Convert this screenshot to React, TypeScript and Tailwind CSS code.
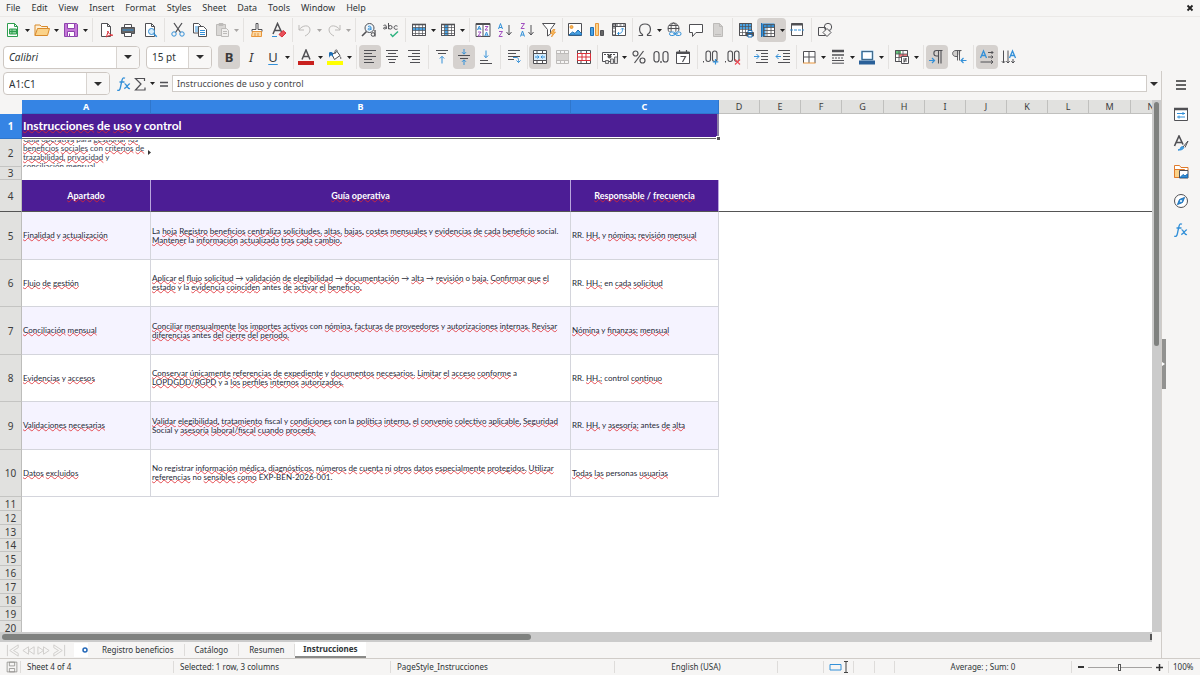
import React from 'react'
import type { ReactNode } from 'react'

const INK = '#505054'
const BLUE = '#3390d8'
const ORANGE = '#e9963a'
const RED = '#d9303a'
const MUTED = '#bdbbb9'

function Icon({ children, stroke = INK }: { children: ReactNode; stroke?: string }) {
  return (
    <svg viewBox="0 0 16 16" className="size-4 shrink-0" fill="none" stroke={stroke} aria-hidden="true">
      {children}
    </svg>
  )
}

function Caret({ muted = false }: { muted?: boolean }) {
  return (
    <svg viewBox="0 0 5 3" className="w-[5px] h-[3px]" aria-hidden="true">
      <path d="M0 0h5L2.500 3z" fill={muted ? '#a9a7a5' : '#222'} />
    </svg>
  )
}

function BigCaret() {
  return (
    <svg viewBox="0 0 8 4" className="w-2 h-1" aria-hidden="true">
      <path d="M0 0h8L4 4z" fill="#2e2e2e" />
    </svg>
  )
}

const page = 'M3.500 1.500h6l3 3v10h-9z'
const grid = 'M1.500 2.500h13v11h-13zM1.500 5.500h13M1.500 8.500h13M1.500 11.500h13M4.500 2.500v11M8 2.500v11M11.500 2.500v11'

const icons = {
  new: (
    <Icon stroke="#2f9e4f">
      <path d="M2.500 1.500h7l3 3v10h-10z" fill="#fff" />
      <path d="M9.500 1.500v3h3" />
      <path d="M4.500 7h7v5h-7z" fill="#8fd3a0" />
      <path d="M4.500 9.500h7M7 7v5" />
    </Icon>
  ),
  open: (
    <Icon stroke="#d98a2b">
      <path d="M1 13.500V3h5l1.500 1.500h6v2" fill="#fdf0d8" />
      <path d="M1 13.500l2.500-7h12l-2 7z" fill="#fbd38a" />
    </Icon>
  ),
  save: (
    <Icon stroke="#8e44ad">
      <path d="M1.500 1.500h12l1 1v12h-13z" fill="#c678d8" />
      <path d="M4.500 1.500h7v5h-7z" fill="#fff" />
      <path d="M4.500 9.500h7v5h-7z" fill="#fff" />
      <path d="M6.500 11.500v3" />
    </Icon>
  ),
  pdf: (
    <Icon>
      <path d={page} fill="#fff" />
      <path d="M9.500 1.500v3h3" />
      <path d="M8 15c1-2 2-4 1.800-6 1 3 2.500 4 5 4.200-2.500 0-5 .5-6.800 1.800z" stroke={RED} />
    </Icon>
  ),
  print: (
    <Icon>
      <path d="M4.500 5V2.500h7V5" fill="#fff" />
      <path d="M1.500 5.500h13v6h-13z" fill="#666" />
      <path d="M2.500 8h11" stroke={BLUE} />
      <path d="M4.500 10.500h7v4h-7z" fill="#fff" />
    </Icon>
  ),
  preview: (
    <Icon>
      <path d={page} fill="#fff" />
      <path d="M9.500 1.500v3h3" />
      <circle cx="9.500" cy="9.500" r="3" stroke={BLUE} fill="#d8ecfa" />
      <path d="M11.800 11.800l3 3" stroke={BLUE} strokeWidth="1.500" />
    </Icon>
  ),
  cut: (
    <Icon>
      <path d="M4 1l6.500 9.500M12 1L5.500 10.500" strokeWidth="1.300" />
      <circle cx="4" cy="12" r="2.200" stroke={BLUE} />
      <circle cx="12" cy="12" r="2.200" stroke={BLUE} />
    </Icon>
  ),
  copy: (
    <Icon>
      <path d="M1.500 1.500h5l2.500 2.500v7h-7.500z" fill="#fff" />
      <path d="M3 5h4M3 7h3M3 9h3" stroke={BLUE} />
      <path d="M6.500 4.500h5l3 3v7h-8z" fill="#fff" />
      <path d="M8 8.500h5M8 10.500h5M8 12.500h5" stroke={BLUE} />
    </Icon>
  ),
  paste: (
    <Icon stroke={MUTED}>
      <path d="M2.500 2.500h9v11h-9z" fill="#d9d7d5" />
      <path d="M5 1.500h4v2H5z" />
      <path d="M7.500 6.500h5l2 2v6h-7z" fill="#f0efee" />
      <path d="M9 9.500h4M9 11.500h4" />
    </Icon>
  ),
  clone: (
    <Icon>
      <path d="M7 1.500h2v6h4v2H3v-2h4z" fill="#fff" />
      <path d="M3.500 9.500h9v5h-10z" stroke={ORANGE} fill="#fbd9a6" />
      <path d="M6 11v3M9 11v3" stroke={ORANGE} />
    </Icon>
  ),
  clear: (
    <Icon>
      <path d="M2 12L6.500 1.500 11 11M4 8.500h5.500" strokeWidth="1.500" />
      <path d="M1 14.500h5" stroke={BLUE} />
      <path d="M8 12.500l4-4 3 2.500-4 4z" fill="#e8505a" stroke={RED} />
    </Icon>
  ),
  undo: (
    <Icon stroke={MUTED}>
      <path d="M2 3v5h5M2 8c3-5 11-6 11 0 0 3-3 5-5 6" />
    </Icon>
  ),
  redo: (
    <Icon stroke={MUTED}>
      <path d="M14 3v5H9M14 8C11 3 3 2 3 8c0 3 3 5 5 6" />
    </Icon>
  ),
  find: (
    <Icon>
      <circle cx="8.500" cy="6" r="4.500" fill="#eef6fc" />
      <path d="M5.500 9.500L1 14" strokeWidth="1.600" />
      <path d="M7 4.500c2-1 3 0 3 1v2.500M10 6c-2 0-3 .3-3 1.200s2 1 3 0" stroke={BLUE} />
      <path d="M14 8v6.500" strokeWidth="1.300" />
      <circle cx="12" cy="12.500" r="1.800" />
    </Icon>
  ),
  spell: (
    <Icon>
      <path d="M.5 3.500c1-.6 2.800-.6 2.800.8V7M3.300 5.200C2 5.200.5 5.300.5 6.300s2 .8 2.800-.3M5.500 1v6.200" />
      <circle cx="7.300" cy="5.300" r="1.800" />
      <path d="M14.500 4.200c-1.500-1-3.500-.4-3.500 1.300S13 7.800 14.500 7" />
      <path d="M7.500 12l2.200 2.500L15 9.500" stroke="#2fb380" strokeWidth="1.500" />
    </Icon>
  ),
  row: (
    <Icon>
      <path d="M1.500 2.500h13v11h-13z" fill="#fff" />
      <path d="M2 5.500h12v3H2z" fill="#4aa3e3" stroke="none" />
      <path d={grid} strokeWidth=".7" />
      <path d="M1 2.500h14" strokeWidth="1.600" />
    </Icon>
  ),
  column: (
    <Icon>
      <path d="M1.500 2.500h13v11h-13z" fill="#fff" />
      <path d="M4.500 3H8v10.500H4.500z" fill="#4aa3e3" stroke="none" />
      <path d={grid} strokeWidth=".7" />
      <path d="M1 2.500h14" strokeWidth="1.600" />
    </Icon>
  ),
  sort: (
    <Icon>
      <path d="M1 1.500h14v13H1zM8 2v12.500" fill="#fff" />
      <path d="M1 2h14" strokeWidth="2" />
      <path d="M2.500 8l1.800-4L6 8M3 6.800h2.500M9.800 14l1.700-4 1.700 4M10.300 13h2.500" stroke={BLUE} />
      <path d="M3 10h3l-3 4h3M10 4.500h3l-3 3.500h3" stroke="#a24fc0" />
    </Icon>
  ),
  ascending: (
    <Icon>
      <path d="M1.500 7l2-5.500 2 5.500M2.200 5.500H5" stroke={BLUE} />
      <path d="M2 9.500h3.500l-3.500 5h3.500" stroke="#a24fc0" />
      <path d="M12 3v9.500M9.500 10l2.500 3 2.500-3" />
    </Icon>
  ),
  descending: (
    <Icon>
      <path d="M2 1.500h3.500l-3.500 5h3.500" stroke="#a24fc0" />
      <path d="M1.500 14.500l2-5.500 2 5.500M2.200 13H5" stroke={BLUE} />
      <path d="M12 3v9.500M9.500 10l2.500 3 2.500-3" />
    </Icon>
  ),
  filter: (
    <Icon>
      <path d="M1.500 1.500h12.500L9.500 7.500v4.500l-3 2V7.500z" fill="#fff" />
      <path d="M12 7.500l-2.500 4h2.200L10.500 15l4-5h-2.200l1.700-2.500z" fill="#fbbf5c" stroke={ORANGE} strokeWidth=".8" />
    </Icon>
  ),
  image: (
    <Icon>
      <path d="M1.500 1.500h13v12h-13z" fill="#fff" />
      <circle cx="4.500" cy="5" r="1.500" fill="#f7b64b" stroke={ORANGE} />
      <path d="M2 13l3.500-3 2.500 1.500 3-3.500 3.500 3.500V13z" fill="#4aa3e3" stroke="#1f6fb5" />
    </Icon>
  ),
  chart: (
    <Icon>
      <path d="M1.500 5.500h3v8h-3z" fill="#4aa3e3" stroke="#1f6fb5" />
      <path d="M6.500 1.500h3v12h-3z" fill="#fbd38a" stroke={ORANGE} />
      <path d="M11.500 8.500h3v5h-3z" fill="#666" />
    </Icon>
  ),
  pivot: (
    <Icon>
      <path d="M1.500 1.500h13v12h-13zM1.500 4.500h13M4.500 1.500v12" fill="#fff" />
      <path d="M1.500 3h13M3 1.500v12" strokeDasharray="2 1.500" />
      <path d="M7 11.500c4 0 4.500-1.500 4.500-5M10 7.500l1.500-1.500L13 7.500M8 10l-1.500 1.500L8 13" stroke={BLUE} />
    </Icon>
  ),
  omega: (
    <Icon>
      <path d="M1.500 13.500h4v-1C1.500 10 1 2 8 2s6.500 8 2.500 10.500v1h4" strokeWidth="1.200" />
    </Icon>
  ),
  link: (
    <Icon>
      <circle cx="7.500" cy="6.500" r="5.500" />
      <ellipse cx="7.500" cy="6.500" rx="2.500" ry="5.500" />
      <path d="M2 6.500h11M3 3.500h9M3 9.500h3" />
      <path d="M3 9.500h13v5H3z" fill="#f6f5f4" stroke="none" />
      <rect x="3.500" y="10" width="5.500" height="3.500" rx="1.700" stroke={BLUE} />
      <rect x="9.500" y="10" width="5.500" height="3.500" rx="1.700" stroke={BLUE} />
      <path d="M7 11.800h5" stroke={BLUE} />
    </Icon>
  ),
  comment: (
    <Icon>
      <path d="M1.500 2.500h13v8H8l-3.500 4v-4h-3z" fill="#fff" />
    </Icon>
  ),
  header: (
    <Icon stroke={MUTED}>
      <path d={page} fill="#d5d3d1" />
      <path d="M9.500 1.500v3h3M5 12.500h6" />
    </Icon>
  ),
  printArea: (
    <Icon>
      <path d="M1.500 1.500h12v12h-12z" fill="#fff" />
      <path d="M2 2h11.500v5H2z" fill="#4aa3e3" stroke="none" />
      <path d="M1.500 1.500h12v12h-12zM1.500 4.500h12M1.500 7.500h12M1.500 10.500h12M4.500 1.500v12M7.500 1.500v12M10.500 1.500v12" strokeWidth=".7" />
      <path d="M8.500 10.500h7v3.500h-7z" fill="#555" />
      <path d="M10 8.500h4v2h-4zM10 12.500h4v2.500h-4z" fill="#fff" stroke="#1f6fb5" />
    </Icon>
  ),
  freeze: (
    <Icon>
      <path d="M3.500 2.500h11v12h-11z" fill="#fff" />
      <path d="M1 1.500h13.500v4h-9v9H1z" fill="#3390d8" stroke="none" />
      <path d="M3.500 2.500h11v12h-11zM3.500 5.500h11M3.500 8.500h11M3.500 11.500h11M7 2.500v12M11 2.500v12" strokeWidth=".8" />
      <path d="M1.500 1v14" stroke="#1f6fb5" />
    </Icon>
  ),
  split: (
    <Icon>
      <path d="M2.500 1.500h11v12h-11z" fill="#fff" />
      <path d="M2.500 2.500h11" strokeWidth="2" />
      <path d="M1 8h14" stroke={BLUE} strokeDasharray="3 1" />
    </Icon>
  ),
  shapes: (
    <Icon>
      <path d="M1.500 5.500h7v8h-7z" />
      <circle cx="11" cy="5" r="3.700" />
      <path d="M10 6.500l4 4-4 4-4-4z" fill="#f6f5f4" />
    </Icon>
  ),
  fontColor: (
    <Icon>
      <path d="M4 10.500L8 1l4 9.500M5.300 7.500h5.400" strokeWidth="1.500" />
      <path d="M0 14h16" stroke="#c9211e" strokeWidth="4" />
    </Icon>
  ),
  highlight: (
    <Icon>
      <path d="M5 5.500l5-3 3 4-5.500 4z" fill="#fff" />
      <path d="M8 5V2.500c0-2 2.500-2 2.500 0M12.500 7c1.500 1 1.500 2.500 1 3" />
      <path d="M2 4c0-1.500 3-1.500 4 0v4C4 5.500 3 6.500 2 9z" fill="#1f6fb5" stroke="none" />
      <path d="M0 14h16" stroke="#ffff00" strokeWidth="4" />
    </Icon>
  ),
  left: (
    <Icon>
      <path d="M2 1.500h12M2 4.500h8M2 7.500h12M2 10.500h8M2 13.500h10" />
    </Icon>
  ),
  center: (
    <Icon>
      <path d="M2 1.500h12M4 4.500h8M2 7.500h12M4 10.500h8M5 13.500h6" />
    </Icon>
  ),
  right: (
    <Icon>
      <path d="M2 1.500h12M6 4.500h8M2 7.500h12M6 10.500h8M4 13.500h10" />
    </Icon>
  ),
  top: (
    <Icon>
      <path d="M2 1.500h12M4 4.500h8" />
      <path d="M8 14.500v-7M5.800 9.500L8 7.300l2.200 2.200" stroke={BLUE} />
    </Icon>
  ),
  middle: (
    <Icon>
      <path d="M2 6.500h12M4 9.500h8" />
      <path d="M8 0v5M6 3.200l2 2 2-2M8 16v-5M6 12.800l2-2 2 2" stroke={BLUE} />
    </Icon>
  ),
  bottom: (
    <Icon>
      <path d="M2 11.500h8M2 14.500h12" />
      <path d="M8 1.500v7M5.800 6.500L8 8.700l2.200-2.200" stroke={BLUE} />
    </Icon>
  ),
  wrap: (
    <Icon>
      <path d="M2 1.500h12M2 4.500h8M2 7.500h12M2 10.500h6" />
      <path d="M7 8.500h3c3 0 2.500 2 2.500 5M10.500 11.500l2 2 2-2" stroke={BLUE} />
    </Icon>
  ),
  merge: (
    <Icon>
      <path d="M1.500 1.500h13v13h-13z" fill="#fff" />
      <path d="M1.500 4.500h13v7h-13z" fill="#d4ebfb" />
      <path d="M5 1.500v3M10.500 1.500v3M5 11.500v3M10.500 11.500v3" />
      <path d="M3 8h4M5.500 6.500L7 8 5.500 9.500M13 8H9M10.500 6.500L9 8l1.500 1.500" stroke={BLUE} />
    </Icon>
  ),
  mergeOff: (
    <Icon stroke={MUTED}>
      <path d="M2.500 1.500h12v13h-12zM2.500 4.500h12M2.500 11.500h12M6.500 1.500v3M10.500 1.500v3M6.500 11.500v3M10.500 11.500v3" />
      <path d="M2.500 5h12v6h-12z" fill="#d5d3d1" stroke="none" />
    </Icon>
  ),
  unmerge: (
    <Icon>
      <path d="M1.500 1.500h13v13h-13z" fill="#fff" />
      <path d="M5 1.500v3M10.500 1.500v3M5 11.500v3M10.500 11.500v3" />
      <path d="M1.500 4.500h13v7h-13zM6 4.500v7M10 4.500v7M1.500 8h13" stroke={RED} />
    </Icon>
  ),
  currency: (
    <Icon>
      <path d="M.5 3.500h15v9H.5z" fill="#fff" />
      <path d="M2 5.500h12" strokeDasharray="2 1" />
      <circle cx="7.500" cy="7.500" r="2" fill="#555" stroke="none" />
      <path d="M3.500 11.500v3h3v-3zM8.500 10v4.500h3V10zM12.500 8v6.500h3V8z" fill="#ddd" strokeWidth=".8" />
    </Icon>
  ),
  percent: (
    <Icon>
      <circle cx="4.500" cy="4.500" r="2.500" strokeWidth="1.200" />
      <circle cx="11.500" cy="11.500" r="2.500" strokeWidth="1.200" />
      <path d="M12.500 2l-9 12" strokeWidth="1.200" />
    </Icon>
  ),
  number: (
    <Icon>
      <rect x="1" y="2.500" width="5" height="10.500" rx="2.500" strokeWidth="1.200" />
      <rect x="10" y="2.500" width="5" height="10.500" rx="2.500" strokeWidth="1.200" />
      <path d="M8 12v2" strokeWidth="1.300" />
    </Icon>
  ),
  date: (
    <Icon>
      <path d="M1.500 3h13v11.500h-13z" fill="#fff" />
      <path d="M1 4h14" strokeWidth="2" />
      <path d="M4.500 1v3M11.500 1v3M5.500 7.500h5l-3 5.500" strokeWidth="1.200" />
    </Icon>
  ),
  addDecimal: (
    <Icon>
      <path d="M.5 12v1.500" />
      <rect x="3" y="2" width="4.500" height="10.500" rx="2.200" strokeWidth="1.100" />
      <rect x="9.500" y="2" width="4.500" height="10.500" rx="2.200" strokeWidth="1.100" />
      <path d="M12.500 10v5.500M9.800 12.800h5.500" stroke={BLUE} strokeWidth="1.200" />
    </Icon>
  ),
  removeDecimal: (
    <Icon>
      <path d="M.5 12v1.500" />
      <rect x="3" y="2" width="4.500" height="10.500" rx="2.200" strokeWidth="1.100" />
      <rect x="9.500" y="2" width="4.500" height="10.500" rx="2.200" strokeWidth="1.100" />
      <path d="M10 10.500l5 5M15 10.500l-5 5" stroke="#ec4b55" strokeWidth="1.200" />
    </Icon>
  ),
  indent: (
    <Icon>
      <path d="M3 1.500h12M8 4.500h7M8 7.500h7M8 10.500h7M3 13.500h12" />
      <path d="M1 7.500h5M3.500 5l2.500 2.500L3.500 10" stroke={BLUE} />
    </Icon>
  ),
  outdent: (
    <Icon>
      <path d="M3 1.500h12M8 4.500h7M8 7.500h7M8 10.500h7M3 13.500h12" />
      <path d="M1 7.500h5M3.500 5L1 7.500 3.500 10" stroke={BLUE} />
    </Icon>
  ),
  border: (
    <Icon>
      <path d="M2.500 14V2.500h11.500V14M8 2.500V14M2.500 8h11.500" fill="#fff" />
      <path d="M2 14h12.500" stroke={ORANGE} />
    </Icon>
  ),
  borderStyle: (
    <Icon>
      <path d="M2 2h12" strokeWidth="2.500" />
      <path d="M2 6h12" strokeWidth="1.500" />
      <path d="M2 9h12" strokeDasharray="2 1" />
      <path d="M2 11.500h12M2 14.200h12" />
    </Icon>
  ),
  borderColor: (
    <Icon>
      <path d="M3 2.500h10.500v8H3z" fill="#fff" stroke={BLUE} strokeWidth="1.500" />
      <path d="M3 2.500h10.500v8H3z" strokeWidth=".6" />
      <path d="M0 13.500h16" stroke="#2a6099" strokeWidth="4" />
    </Icon>
  ),
  conditional: (
    <Icon>
      <path d="M1.500 1.500h12v11h-12z" fill="#fff" />
      <path d="M2 2h5v3H2z" fill="#62c27a" stroke="none" />
      <path d="M5 5h8v3H5z" fill="#ee7a80" stroke="none" />
      <path d="M1.500 1.500h12v11h-12zM1.500 5h12M1.500 8.500h12M5 1.500v11M9 1.500v11" strokeWidth=".8" />
      <path d="M7.500 7.500h7v7h-7z" fill="#fff" />
      <path d="M9 10h4M9 12h4M12 9l-2 4.500" />
    </Icon>
  ),
  ltr: (
    <Icon>
      <path d="M13.500 1.500h-6c-3.500 0-3.500 5.500 0 5.500h1.500M9.500 1.500v13M12 1.500v13" strokeWidth="1.100" />
      <path d="M0 11.500h5.500M3 9l2.500 2.500L3 14" stroke={BLUE} strokeWidth="1.200" />
    </Icon>
  ),
  rtl: (
    <Icon>
      <path d="M10.500 1.500H5c-4.500 0-4.500 6 0 6h1.500z" fill="#cfcdcb" stroke="none" />
      <path d="M10.500 1.500H5c-4.500 0-4.500 6 0 6h1.500M6.500 1.500v10M8.500 1.500v10" strokeWidth=".9" />
      <path d="M15.500 11.500H10M12.500 9L10 11.500l2.500 2.500" stroke={BLUE} strokeWidth="1.200" />
    </Icon>
  ),
  horizontal: (
    <Icon>
      <path d="M1.500 9L4.500 2l3 7M2.700 6.500h4" stroke={BLUE} strokeWidth="1.300" />
      <path d="M9 3.500h5M12.500 2L14 3.500 12.500 5M9 8h5M12.500 6.500L14 8l-1.500 1.500M1.500 13h12.500M12 11.200l2 1.800-2 1.800" />
    </Icon>
  ),
  vertical: (
    <Icon>
      <path d="M8.500 9l3-7 3 7M9.700 6.500h4" stroke={BLUE} strokeWidth="1.300" />
      <path d="M2.500 1.500v12.500M.8 12.200L2.500 14l1.700-1.800M7 1.500v12.500M5.300 12.200L7 14l1.700-1.800M12 10v4M10.300 12.200L12 14l1.700-1.800" />
    </Icon>
  ),
  fx: (
    <Icon stroke={BLUE}>
      <path d="M9 2.200C7 1 6.200 3 5.800 5L4.300 12c-.4 2-1.500 3-3 2M3.500 6h5" strokeWidth="1.300" />
      <path d="M8.500 8c2-1 2.500 5.500 5.500 4.500M14 8c-1.500-.5-4 4.500-5.800 4.500" strokeWidth="1.300" />
    </Icon>
  ),
  sum: (
    <Icon>
      <path d="M12.500 5V2.500h-9L9 8l-5.500 6h9.500V11.500" strokeWidth="1.200" />
    </Icon>
  ),
  equals: (
    <Icon>
      <path d="M4 6.500h8M4 10h8" strokeWidth="1.500" />
    </Icon>
  ),
  menu: (
    <Icon stroke="#333">
      <path d="M3 4h10M3 8h10M3 12h10" strokeWidth="1.500" />
    </Icon>
  ),
  properties: (
    <Icon>
      <path d="M1.500 2.500h13v12h-13z" fill="#fff" />
      <path d="M1 3h14" strokeWidth="2.500" />
      <path d="M4 7.500h8M4 11h8M10 6v3M6 9.500v3" stroke={BLUE} />
    </Icon>
  ),
  styles: (
    <Icon>
      <path d="M1.500 11L6 1l4 8.500M3.200 7.500h5.500" strokeWidth="1.600" />
      <path d="M15 6l-5 6M15 6l-3 6.500" />
      <path d="M5 15c3 0 2-3.500 4.500-3.500 2.500 1 .5 4-4.500 3.500z" fill="#4aa3e3" stroke={BLUE} />
    </Icon>
  ),
  gallery: (
    <Icon stroke="#e07b2c">
      <path d="M1.500 13.500v-12h5L8 3.500h7v3" fill="#fff" />
      <path d="M1.500 13.500v-8h10v8z" fill="#fbd38a" />
      <path d="M6.500 6.500h8.500v7.500H6.500z" fill="#fff" stroke={INK} />
      <path d="M7 13.500l3-3 2 1.500 2.500-2v3.500z" fill="#3390d8" stroke="#1f6fb5" />
    </Icon>
  ),
  navigator: (
    <Icon>
      <circle cx="8" cy="8" r="6.500" fill="#fff" />
      <path d="M11.500 4.500L9.500 9.500l-5 2 2-5z" fill="#3390d8" stroke="#1f6fb5" />
      <circle cx="8" cy="8" r="1" fill="#fff" stroke="none" />
    </Icon>
  ),
}

type IconName = keyof typeof icons
type Tool = {
  icon?: IconName
  glyph?: ReactNode
  label?: string
  arrow?: boolean
  active?: boolean
  muted?: boolean
  sep?: 'wide' | 'narrow'
}

const wide: Tool = { sep: 'wide' }
const narrow: Tool = { sep: 'narrow' }

const standardTools: Tool[] = [
  { icon: 'new', label: 'New', arrow: true },
  { icon: 'open', label: 'Open', arrow: true },
  { icon: 'save', label: 'Save', arrow: true },
  wide,
  { icon: 'pdf', label: 'Export as PDF' },
  { icon: 'print', label: 'Print' },
  { icon: 'preview', label: 'Print preview' },
  wide,
  { icon: 'cut', label: 'Cut' },
  { icon: 'copy', label: 'Copy' },
  { icon: 'paste', label: 'Paste', arrow: true, muted: true },
  wide,
  { icon: 'clone', label: 'Clone formatting' },
  { icon: 'clear', label: 'Clear formatting' },
  narrow,
  { icon: 'undo', label: 'Undo', arrow: true, muted: true },
  { icon: 'redo', label: 'Redo', arrow: true, muted: true },
  wide,
  { icon: 'find', label: 'Find and replace' },
  { icon: 'spell', label: 'Spelling' },
  wide,
  { icon: 'row', label: 'Row', arrow: true },
  { icon: 'column', label: 'Column', arrow: true },
  wide,
  { icon: 'sort', label: 'Sort' },
  { icon: 'ascending', label: 'Sort ascending' },
  { icon: 'descending', label: 'Sort descending' },
  { icon: 'filter', label: 'AutoFilter' },
  narrow,
  { icon: 'image', label: 'Insert image' },
  { icon: 'chart', label: 'Insert chart' },
  { icon: 'pivot', label: 'Insert pivot table' },
  narrow,
  { icon: 'omega', label: 'Insert special character', arrow: true },
  { icon: 'link', label: 'Insert hyperlink' },
  { icon: 'comment', label: 'Insert comment' },
  { icon: 'header', label: 'Headers and footers', muted: true },
  wide,
  { icon: 'printArea', label: 'Define print area' },
  { icon: 'freeze', label: 'Freeze rows and columns', arrow: true, active: true },
  { icon: 'split', label: 'Split window' },
  wide,
  { icon: 'shapes', label: 'Show draw functions' },
]

const formatTools: Tool[] = [
  { glyph: <span className="font-bold">B</span>, label: 'Bold', active: true },
  { glyph: <span className="italic">I</span>, label: 'Italic' },
  { glyph: <span className="underline decoration-[#3390d8] underline-offset-2">U</span>, label: 'Underline', arrow: true },
  narrow,
  { icon: 'fontColor', label: 'Font color', arrow: true },
  { icon: 'highlight', label: 'Background color', arrow: true },
  wide,
  { icon: 'left', label: 'Align left', active: true },
  { icon: 'center', label: 'Center horizontally' },
  { icon: 'right', label: 'Align right' },
  wide,
  { icon: 'top', label: 'Align top' },
  { icon: 'middle', label: 'Center vertically', active: true },
  { icon: 'bottom', label: 'Align bottom' },
  wide,
  { icon: 'wrap', label: 'Wrap text' },
  narrow,
  { icon: 'merge', label: 'Merge and center cells', active: true },
  { icon: 'mergeOff', label: 'Merge cells', muted: true },
  { icon: 'unmerge', label: 'Unmerge cells' },
  narrow,
  { icon: 'currency', label: 'Format as currency', arrow: true },
  { icon: 'percent', label: 'Format as percent' },
  { icon: 'number', label: 'Format as number' },
  { icon: 'date', label: 'Format as date' },
  wide,
  { icon: 'addDecimal', label: 'Add decimal place' },
  { icon: 'removeDecimal', label: 'Delete decimal place' },
  wide,
  { icon: 'indent', label: 'Increase indent' },
  { icon: 'outdent', label: 'Decrease indent' },
  narrow,
  { icon: 'border', label: 'Borders', arrow: true },
  { icon: 'borderStyle', label: 'Border style', arrow: true },
  { icon: 'borderColor', label: 'Border color', arrow: true },
  wide,
  { icon: 'conditional', label: 'Conditional formatting', arrow: true },
  wide,
  { icon: 'ltr', label: 'Left-to-right', active: true },
  { icon: 'rtl', label: 'Right-to-left' },
  wide,
  { icon: 'horizontal', label: 'Text direction from left to right', active: true },
  { icon: 'vertical', label: 'Text direction from top to bottom' },
]

function ToolItem({ tool }: { tool: Tool }) {
  if (tool.sep) {
    return (
      <div className={`flex shrink-0 justify-center ${tool.sep === 'wide' ? 'w-1.5' : 'w-1'}`}>
        <div className="h-6 w-px bg-[#e4e2e0]" />
      </div>
    )
  }
  return (
    <div className={`flex h-6 shrink-0 items-center rounded-sm ${tool.active ? 'bg-[#d5d1ce]' : ''}`}>
      <button
        type="button"
        aria-label={tool.label}
        disabled={tool.muted}
        className="flex h-6 w-[22px] items-center justify-center text-[13px] leading-none text-[#3a3a3a]"
      >
        {tool.icon ? icons[tool.icon] : tool.glyph}
      </button>
      {tool.arrow && (
        <button type="button" aria-label={`${tool.label} options`} className="flex h-6 w-[7px] items-center justify-center">
          <Caret muted={tool.muted} />
        </button>
      )}
    </div>
  )
}

function ComboBox({
  label,
  value,
  width,
  italic = false,
}: {
  label: string
  value: string
  width: string
  italic?: boolean
}) {
  return (
    <div className={`flex h-[23px] shrink-0 overflow-hidden rounded border border-[#cdc7c2] bg-white ${width}`}>
      <input
        aria-label={label}
        defaultValue={value}
        className={`min-w-0 flex-1 px-[5px] text-[10px] text-[#2e3436] outline-none ${italic ? 'italic' : ''}`}
      />
      <button
        type="button"
        aria-label={`${label} list`}
        className="flex w-[23px] items-center justify-center border-l border-[#d8d4d0] bg-[#f8f7f6]"
      >
        <BigCaret />
      </button>
    </div>
  )
}

// Words the English dictionary accepts; everything else gets a squiggle.
const accepted = new Set([
  'la', 'y', 'con', 'a', 'no', 'social.', 'social', 'antes', 'para', 'control', 'rr.', 'en', 'o',
  'personas', 'registrar', 'fiscal', 'exp-ben-2026-001.', '→', '/',
])

function Spelled({ text }: { text: string }) {
  return (
    <>
      {text.split(' ').map((word, i) => (
        <React.Fragment key={i}>
          {i > 0 && ' '}
          {accepted.has(word.toLowerCase()) ? (
            word
          ) : (
            <span className="underline decoration-[#e0282e]/80 decoration-wavy decoration-1 -underline-offset-1 [text-decoration-skip-ink:none]">
              {word}
            </span>
          )}
        </React.Fragment>
      ))}
    </>
  )
}

const columns = [
  { name: 'A', width: 'w-[129px]', selected: true },
  { name: 'B', width: 'w-[420px]', selected: true },
  { name: 'C', width: 'w-[148px]', selected: true },
  { name: 'D', width: 'w-[41px]' },
  { name: 'E', width: 'w-[41px]' },
  { name: 'F', width: 'w-[41px]' },
  { name: 'G', width: 'w-[42px]' },
  { name: 'H', width: 'w-[41px]' },
  { name: 'I', width: 'w-[41px]' },
  { name: 'J', width: 'w-[41px]' },
  { name: 'K', width: 'w-[41px]' },
  { name: 'L', width: 'w-[41px]' },
  { name: 'M', width: 'w-[42px]' },
  { name: 'N', width: 'w-[41px]' },
]

const intro = [
  'Guía operativa para gestionar los',
  'beneficios sociales con criterios de',
  'trazabilidad, privacidad y',
  'conciliación mensual.',
]

const sections = [
  {
    row: 5,
    height: 'h-[48px]',
    title: 'Finalidad y actualización',
    guide: [
      'La hoja Registro beneficios centraliza solicitudes, altas, bajas, costes mensuales y evidencias de cada beneficio social.',
      'Mantener la información actualizada tras cada cambio.',
    ],
    owner: 'RR. HH. y nómina; revisión mensual',
  },
  {
    row: 6,
    height: 'h-[47px]',
    title: 'Flujo de gestión',
    guide: [
      'Aplicar el flujo solicitud → validación de elegibilidad → documentación → alta → revisión o baja. Confirmar que el',
      'estado y la evidencia coinciden antes de activar el beneficio.',
    ],
    owner: 'RR. HH.; en cada solicitud',
  },
  {
    row: 7,
    height: 'h-[48px]',
    title: 'Conciliación mensual',
    guide: [
      'Conciliar mensualmente los importes activos con nómina, facturas de proveedores y autorizaciones internas. Revisar',
      'diferencias antes del cierre del periodo.',
    ],
    owner: 'Nómina y finanzas; mensual',
  },
  {
    row: 8,
    height: 'h-[47px]',
    title: 'Evidencias y accesos',
    guide: [
      'Conservar únicamente referencias de expediente y documentos necesarios. Limitar el acceso conforme a',
      'LOPDGDD/RGPD y a los perfiles internos autorizados.',
    ],
    owner: 'RR. HH.; control continuo',
  },
  {
    row: 9,
    height: 'h-[48px]',
    title: 'Validaciones necesarias',
    guide: [
      'Validar elegibilidad, tratamiento fiscal y condiciones con la política interna, el convenio colectivo aplicable, Seguridad',
      'Social y asesoría laboral/fiscal cuando proceda.',
    ],
    owner: 'RR. HH. y asesoría; antes de alta',
  },
  {
    row: 10,
    height: 'h-[47px]',
    title: 'Datos excluidos',
    guide: [
      'No registrar información médica, diagnósticos, números de cuenta ni otros datos especialmente protegidos. Utilizar',
      'referencias no sensibles como EXP-BEN-2026-001.',
    ],
    owner: 'Todas las personas usuarias',
  },
]

const emptyRows = [
  { row: 11, height: 'h-[14px]' },
  { row: 12, height: 'h-[14px]' },
  { row: 13, height: 'h-[14px]' },
  { row: 14, height: 'h-[13px]' },
  { row: 15, height: 'h-[14px]' },
  { row: 16, height: 'h-[14px]' },
  { row: 17, height: 'h-[14px]' },
  { row: 18, height: 'h-[13px]' },
  { row: 19, height: 'h-[14px]' },
  { row: 20, height: 'h-[14px]' },
]

function RowHeader({ row, selected = false, frozen = false }: { row: number; selected?: boolean; frozen?: boolean }) {
  return (
    <th
      scope="row"
      className={`border-r border-b p-0 text-center align-middle font-['Noto_Sans',sans-serif] text-[10px] leading-3 ${
        selected
          ? 'border-[#2f76cc] bg-[#3584e4] font-bold text-white'
          : `border-r-[#bdbdbb] bg-[#e1e1df] font-normal text-[#3c3c3c] ${frozen ? 'border-b-[#555]' : 'border-b-[#c4c4c2]'}`
      }`}
    >
      {row}
    </th>
  )
}

function Sheet() {
  const head = 'border-r border-b border-r-[#b9a6dd] border-b-[#555] bg-[#4c1d95] p-0 text-center text-[9px] font-bold text-white'
  const cell = 'border-r border-b border-[#d4d5dc] p-0 pl-px text-left align-middle'

  return (
    <table className="w-[1172px] table-fixed border-separate border-spacing-0 font-['Lato','Open_Sans',sans-serif] text-[8px] leading-[9px] text-[#1f2937]">
      <colgroup>
        <col className="w-[22px]" />
        {columns.map((col) => (
          <col key={col.name} className={col.width} />
        ))}
      </colgroup>
      <thead className="font-['Noto_Sans',sans-serif]">
        <tr className="h-[14px]">
          <td className="bg-[#f6f5f4] p-0" />
          {columns.map((col) => (
            <th
              key={col.name}
              scope="col"
              className={`border-r border-b p-0 text-[9px] leading-3 ${
                col.selected
                  ? 'border-[#2f76cc] bg-[#3584e4] font-bold text-white'
                  : 'border-[#c0c0be] bg-[#e1e1df] font-normal text-[#3c3c3c]'
              }`}
            >
              {col.name}
            </th>
          ))}
        </tr>
      </thead>
      <tbody>
        <tr className="h-[25px]">
          <RowHeader row={1} selected />
          <td colSpan={3} className="relative border-r-2 border-b border-r-[#8a7fa5] border-b-[#666] bg-[#4c1d95] p-0">
            <div className="flex h-6 items-center border-b border-white pl-px text-[12px] font-bold leading-none text-white">
              <span>
                <Spelled text="Instrucciones de uso" /> y control
              </span>
            </div>
            <span className="absolute -right-[3px] -bottom-[2px] size-[4px] border-t border-l border-white bg-[#555]" />
          </td>
          <td colSpan={11} className="p-0" />
        </tr>
        <tr className="h-[28px]">
          <RowHeader row={2} />
          <td className="relative p-0 pl-px text-[#374151]">
            <div className="flex h-[27px] items-center overflow-hidden whitespace-nowrap">
              <p>
                {intro.map((line) => (
                  <span key={line} className="block">
                    <Spelled text={line} />
                  </span>
                ))}
              </p>
            </div>
            <svg viewBox="0 0 3 5" className="absolute right-0 bottom-3 h-[5px] w-[3px]" aria-hidden="true">
              <path d="M0 0l3 2.500L0 5z" fill="#333" />
            </svg>
          </td>
          <td colSpan={13} className="p-0" />
        </tr>
        <tr className="h-[13px]">
          <RowHeader row={3} />
          <td colSpan={14} className="p-0" />
        </tr>
        <tr className="h-[32px]">
          <RowHeader row={4} frozen />
          <td className={head}>
            <Spelled text="Apartado" />
          </td>
          <td className={head}>
            <Spelled text="Guía operativa" />
          </td>
          <td className={head}>
            <Spelled text="Responsable / frecuencia" />
          </td>
          <td colSpan={11} className="border-b border-[#555] p-0" />
        </tr>
        {sections.map((section, i) => (
          <tr key={section.row} className={section.height}>
            <RowHeader row={section.row} />
            <td className={`${cell} ${i % 2 === 0 ? 'bg-[#f5f3ff]' : ''}`}>
              <Spelled text={section.title} />
            </td>
            <td className={`${cell} whitespace-nowrap ${i % 2 === 0 ? 'bg-[#f5f3ff]' : ''}`}>
              {section.guide.map((line) => (
                <span key={line} className="block">
                  <Spelled text={line} />
                </span>
              ))}
            </td>
            <td className={`${cell} ${i % 2 === 0 ? 'bg-[#f5f3ff]' : ''}`}>
              <Spelled text={section.owner} />
            </td>
            <td colSpan={11} className="p-0" />
          </tr>
        ))}
        {emptyRows.map(({ row, height }) => (
          <tr key={row} className={height}>
            <RowHeader row={row} />
            <td colSpan={14} className="p-0" />
          </tr>
        ))}
      </tbody>
    </table>
  )
}

const menus = ['File', 'Edit', 'View', 'Insert', 'Format', 'Styles', 'Sheet', 'Data', 'Tools', 'Window', 'Help']
const tabs = ['Registro beneficios', 'Catálogo', 'Resumen', 'Instrucciones']
const deck: { icon: IconName; label: string }[] = [
  { icon: 'menu', label: 'Sidebar settings' },
  { icon: 'properties', label: 'Properties' },
  { icon: 'styles', label: 'Styles' },
  { icon: 'gallery', label: 'Gallery' },
  { icon: 'navigator', label: 'Navigator' },
  { icon: 'fx', label: 'Functions' },
]

const tabArrows = [
  { label: 'First sheet', d: 'M1.500 2v12M13 2L4 8l9 6v-3L8 8l5-3z' },
  { label: 'Previous sheet', d: 'M8 4L2 8l6 4zM14 4L8 8l6 4z' },
  { label: 'Next sheet', d: 'M2 4l6 4-6 4zM8 4l6 4-6 4z' },
  { label: 'Last sheet', d: 'M14.500 2v12M3 2l9 6-9 6v-3l5-3-5-3z' },
]

function Divider() {
  return <div className="h-3 w-px shrink-0 bg-[#dedcda]" />
}

export default function App() {
  return (
    <div className="flex h-screen flex-col overflow-hidden bg-[#f6f5f4] font-['Noto_Sans','Open_Sans',sans-serif] text-[9px] leading-3 text-[#2e3436]">
      <header className="flex h-[17px] shrink-0 items-center justify-between border-b border-[#ebe9e7] px-1.5">
        <nav className="flex gap-[11px]">
          {menus.map((menu) => (
            <button key={menu} type="button">
              {menu}
            </button>
          ))}
        </nav>
        <button type="button" aria-label="Close document">
          <svg viewBox="0 0 8 8" className="size-2" aria-hidden="true">
            <path d="M1.500 1.500l5 5M6.500 1.500l-5 5" stroke="#222" strokeWidth="1.800" />
          </svg>
        </button>
      </header>

      <div role="toolbar" aria-label="Standard" className="flex h-[26px] shrink-0 items-center pl-0.5">
        {standardTools.map((tool, i) => (
          <ToolItem key={i} tool={tool} />
        ))}
      </div>

      <div role="toolbar" aria-label="Formatting" className="flex h-7 shrink-0 items-center pl-[3px]">
        <ComboBox label="Font name" value="Calibri" width="w-[137px]" italic />
        <div className="w-1.5 shrink-0" />
        <ComboBox label="Font size" value="15 pt" width="w-[66px]" />
        <div className="w-1.5 shrink-0" />
        {formatTools.map((tool, i) => (
          <ToolItem key={i} tool={tool} />
        ))}
      </div>

      <div className="flex min-h-0 flex-1">
        <main className="flex min-w-0 flex-1 flex-col">
          <div className="flex h-[29px] shrink-0 items-center pb-1 pl-[3px]">
            <ComboBox label="Name box" value="A1:C1" width="w-[107px]" />
            <div className="flex shrink-0 items-center pl-1.5">
              <button type="button" aria-label="Function wizard">
                {icons.fx}
              </button>
              <button type="button" aria-label="Select function">
                {icons.sum}
              </button>
              <button type="button" aria-label="Select function options" className="flex w-2 justify-center">
                <Caret />
              </button>
              <button type="button" aria-label="Formula">
                {icons.equals}
              </button>
            </div>
            <input
              aria-label="Input line"
              defaultValue="Instrucciones de uso y control"
              className="h-[17px] min-w-0 flex-1 border border-[#d0ccc8] bg-white px-1 text-[9px] text-[#4a4a4a] outline-none"
            />
            <button type="button" aria-label="Expand formula bar" className="flex w-3.5 shrink-0 justify-center">
              <BigCaret />
            </button>
          </div>

          <div className="flex min-h-0 flex-1">
            <div className="min-w-0 flex-1 overflow-hidden bg-white">
              <Sheet />
            </div>
            <div className="flex w-[9px] shrink-0 flex-col bg-[#cbcbcb] px-0.5 pt-0.5">
              <div className="h-[46%] rounded-full bg-[#7f817f]" />
            </div>
          </div>

          <div className="mr-[9px] flex h-[10px] shrink-0 bg-[#cbcbcb] py-0.5 pl-0.5">
            <div className="w-[46%] rounded-full bg-[#7f817f]" />
            <div className="ml-auto w-0.5 bg-[#555]" />
          </div>

          <div className="flex h-4 shrink-0 items-center pl-1.5 text-[8px]">
            {tabArrows.map((arrow) => (
              <button key={arrow.label} type="button" aria-label={arrow.label} className="w-[15px] shrink-0">
                <svg viewBox="0 0 16 16" className="size-[15px]" fill="none" stroke="#cfcdcb" aria-hidden="true">
                  <path d={arrow.d} />
                </svg>
              </button>
            ))}
            <button type="button" aria-label="Add sheet" className="ml-2 flex h-3.5 w-3.5 shrink-0 items-center justify-end bg-white">
              <svg viewBox="0 0 6 6" className="size-1.5" fill="none" aria-hidden="true">
                <circle cx="3" cy="3" r="2" stroke="#2468b8" strokeWidth="1.500" />
              </svg>
            </button>
            <div role="tablist" className="flex h-4 items-stretch pl-1">
              {tabs.map((tab) => (
                <button
                  key={tab}
                  type="button"
                  role="tab"
                  aria-selected={tab === 'Instrucciones'}
                  className={
                    tab === 'Instrucciones'
                      ? 'border-b-2 border-[#8a8a88] bg-white px-2 font-bold'
                      : 'flex items-center gap-2.5 pl-2.5'
                  }
                >
                  {tab}
                  {tab !== 'Instrucciones' && <Divider />}
                </button>
              ))}
            </div>
          </div>
        </main>

        <aside className="relative flex w-[39px] shrink-0 flex-col items-center gap-[13px] border-l border-[#d0ccc8] pt-1.5">
          {deck.map((item) => (
            <button key={item.label} type="button" aria-label={item.label}>
              {icons[item.icon]}
            </button>
          ))}
          <button
            type="button"
            aria-label="Hide sidebar"
            className="absolute top-[268px] left-0 flex h-[50px] w-1 items-center bg-[#929290]"
          >
            <svg viewBox="0 0 3 4" className="h-1 w-[3px]" aria-hidden="true">
              <path d="M0 0l3 2-3 2z" fill="#fff" />
            </svg>
          </button>
        </aside>
      </div>

      <footer className="flex h-[17px] shrink-0 items-center border-t border-[#d0ccc8] text-[8px]">
        <svg viewBox="0 0 16 16" className="ml-1.5 size-3 shrink-0" fill="none" stroke="#8a8886" aria-hidden="true">
          <path d="M1.500 1.500h13v13h-13zM4.500 1.500h7v5h-7zM4.500 10h7v4.500h-7z" />
        </svg>
        <div className="ml-0.5 flex w-[153px] shrink-0 items-center gap-1.5">
          <Divider />
          Sheet 4 of 4
        </div>
        <div className="flex w-[217px] shrink-0 items-center gap-1.5">
          <Divider />
          Selected: 1 row, 3 columns
        </div>
        <div className="flex w-[224px] shrink-0 items-center gap-1.5">
          <Divider />
          PageStyle_Instrucciones
        </div>
        <Divider />
        <div className="w-[162px] shrink-0 text-center">English (USA)</div>
        <Divider />
        <div className="w-[45px] shrink-0" />
        <Divider />
        <div className="flex w-[29px] shrink-0 justify-center">
          <svg viewBox="0 0 20 14" className="h-3.5 w-5" fill="none" aria-hidden="true">
            <path d="M1 4.500h11v5.500H1z" stroke={BLUE} />
            <path d="M15 1.500h4M15 12.500h4M17 1.500v11" stroke="#444" />
          </svg>
        </div>
        <Divider />
        <div className="w-5 shrink-0" />
        <Divider />
        <div className="w-[19px] shrink-0" />
        <Divider />
        <div className="flex-1 text-center">Average: ; Sum: 0</div>
        <Divider />
        <div className="flex w-24 shrink-0 items-center justify-center gap-1">
          <button type="button" aria-label="Zoom out" className="h-0.5 w-1.5 bg-[#333]" />
          <input
            type="range"
            aria-label="Zoom"
            defaultValue={50}
            className="h-2 w-[64px] appearance-none bg-transparent [&::-webkit-slider-runnable-track]:h-px [&::-webkit-slider-runnable-track]:bg-[#a5a3a1] [&::-webkit-slider-thumb]:-mt-[3px] [&::-webkit-slider-thumb]:h-[7px] [&::-webkit-slider-thumb]:w-[3px] [&::-webkit-slider-thumb]:appearance-none [&::-webkit-slider-thumb]:border [&::-webkit-slider-thumb]:border-[#555] [&::-webkit-slider-thumb]:bg-white"
          />
          <button type="button" aria-label="Zoom in">
            <svg viewBox="0 0 7 7" className="size-[7px]" aria-hidden="true">
              <path d="M0 3.500h7M3.500 0v7" stroke="#333" strokeWidth="1.500" />
            </svg>
          </button>
        </div>
        <Divider />
        <div className="w-[31px] shrink-0 pl-1">100%</div>
      </footer>
    </div>
  )
}
